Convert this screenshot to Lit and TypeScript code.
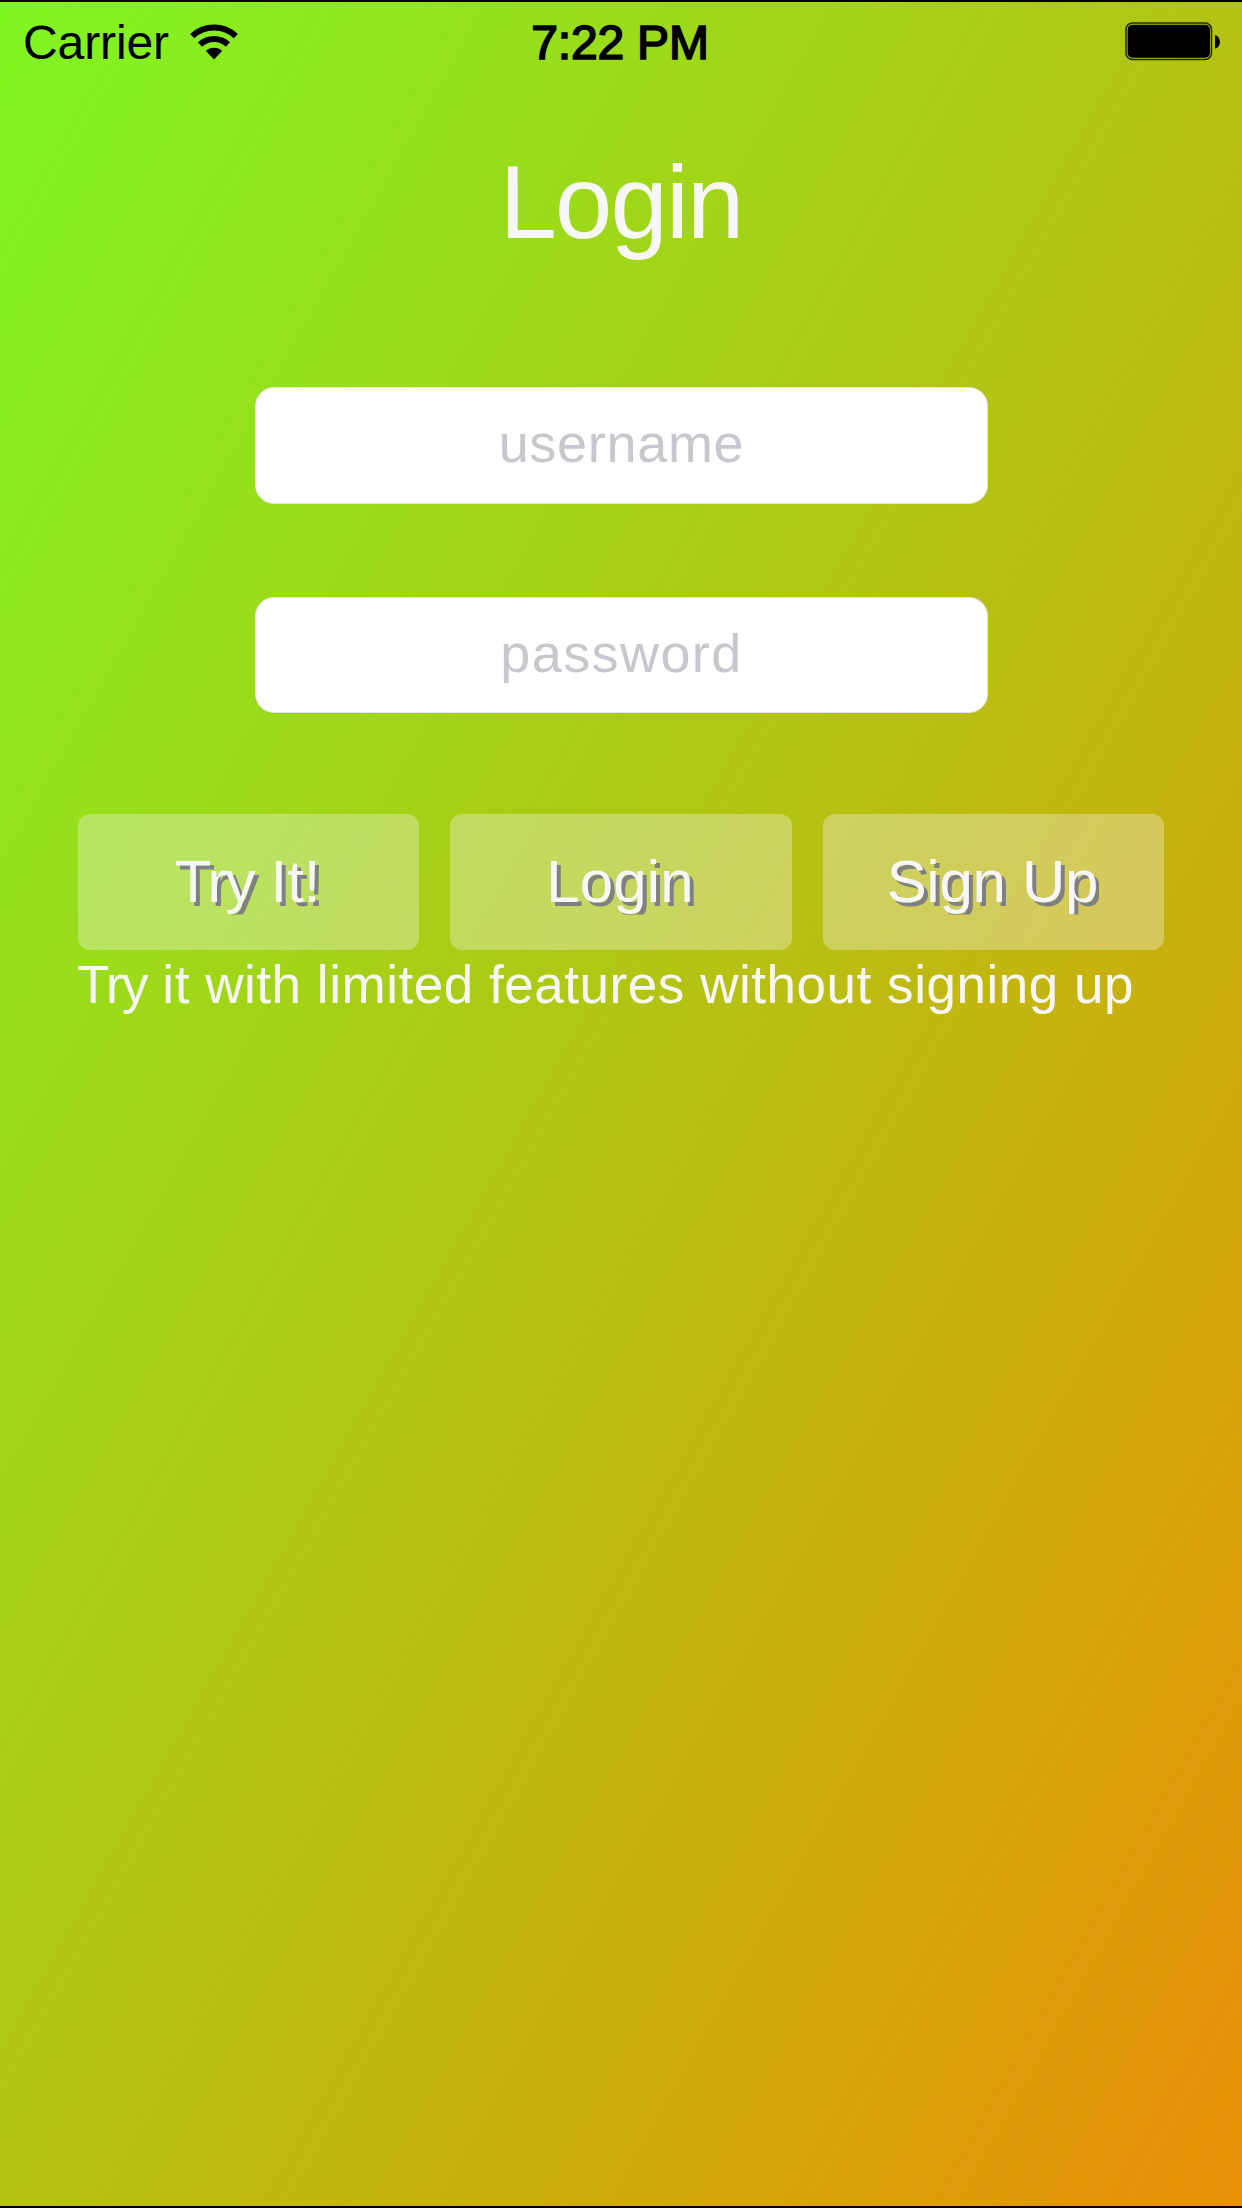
import { LitElement, html, css } from "lit";
import { customElement } from "lit/decorators.js";

@customElement("status-bar")
class StatusBar extends LitElement {
  static styles = css`
    :host {
      display: grid;
      grid-template-columns: 1fr auto 1fr;
      align-items: center;
      height: 81px;
      padding: 0 22px 0 23px;
      box-sizing: border-box;
      font-size: 48px;
      line-height: 56px;
      color: #000;
    }
    .left {
      display: flex;
      align-items: center;
      gap: 20px;
    }
    .carrier {
      letter-spacing: -0.1px;
    }
    .wifi {
      width: 50px;
      height: 38px;
      display: block;
      margin-top: -4px;
    }
    .time {
      letter-spacing: -0.2px;
      margin-left: -3px;
      -webkit-text-stroke: 1.7px #000;
    }
    .battery {
      justify-self: end;
      width: 96px;
      height: 40px;
      display: block;
      margin-top: -3px;
    }
  `;

  render() {
    return html`
      <div class="left">
        <span class="carrier">Carrier</span>
        <svg class="wifi" viewBox="0 0 50 38">
          <g fill="none" stroke="#000" stroke-width="6">
            <path d="M3.2 14.1A32 32 0 0 1 46.8 14.1" />
            <path d="M11 22.5A20.5 20.5 0 0 1 39 22.5" />
          </g>
          <path d="M25 37.5L16.9 29.1A11.7 11.7 0 0 1 33.1 29.1Z" />
        </svg>
      </div>
      <span class="time">7:22 PM</span>
      <svg class="battery" viewBox="0 0 96 40">
        <rect x="2" y="2" width="85.5" height="36.5" rx="6.5" fill="none" stroke="#000" stroke-opacity=".8" stroke-width="1.5" />
        <rect x="3.6" y="3.8" width="82.4" height="33" rx="5" />
        <path d="M91 14.3C97.5 15.5 97.5 26.5 91 27.7Z" />
      </svg>
    `;
  }
}

@customElement("action-button")
class ActionButton extends LitElement {
  static styles = css`
    :host {
      display: block;
    }
    .button {
      display: flex;
      width: 100%;
      height: 136px;
      align-items: center;
      justify-content: center;
      padding: 0 2px 2px 0;
      border: 0;
      border-radius: 12px;
      background: rgba(247, 247, 247, 0.33);
      color: #f7f7f7;
      font: 60px/67px "Liberation Sans", Arial, sans-serif;
      text-shadow: 4px 4px 0 #808080;
    }
    .label {
      clip-path: inset(0 -1px 0 -4px);
    }
  `;

  render() {
    return html`<button class="button"><span class="label"><slot></slot></span></button>`;
  }
}

@customElement("app-root")
class AppRoot extends LitElement {
  static styles = css`
    :host {
      display: block;
      font-family: "Liberation Sans", Arial, sans-serif;
    }
    .screen {
      height: 2208px;
      box-sizing: border-box;
      border-top: 2px solid #000;
      border-bottom: 2px solid #000;
      background: linear-gradient(to bottom right, #7ff621, #ea9006);
    }
    .title {
      margin: 60px 0 0;
      font-size: 103px;
      line-height: 120px;
      font-weight: 400;
      letter-spacing: -1.8px;
      text-align: center;
      color: #f7f7f7;
    }
    .fields {
      display: flex;
      flex-direction: column;
      align-items: center;
      gap: 93px;
      margin-top: 124px;
    }
    .field {
      width: 733px;
      height: 117px;
      box-sizing: border-box;
      padding: 0 19px 5px 20px;
      border: 1px solid #e4e4e6;
      border-radius: 19px;
      background: #fff;
      font: 54px "Liberation Sans", Arial, sans-serif;
      letter-spacing: 0.7px;
      text-align: center;
      color: #222;
    }
    .password {
      height: 116px;
      letter-spacing: 1.4px;
    }
    .field::placeholder {
      color: #c7c7cd;
      opacity: 1;
    }
    .actions {
      display: grid;
      grid-template-columns: repeat(3, 1fr);
      gap: 31px;
      margin: 101px 78px 0;
    }
    .try {
      letter-spacing: -1.8px;
    }
    .login {
      letter-spacing: 0.1px;
    }
    .signup {
      letter-spacing: -0.3px;
    }
    .hint {
      margin: 5px 77px 0;
      font-size: 53px;
      line-height: 60px;
      letter-spacing: 0.54px;
      white-space: nowrap;
      color: #f7f7f7;
    }
    .hint .try {
      letter-spacing: -1.5px;
    }
  `;

  render() {
    return html`
      <main class="screen">
        <status-bar></status-bar>
        <h1 class="title">Login</h1>
        <div class="fields">
          <input class="field" type="text" placeholder="username" />
          <input class="field password" type="password" placeholder="password" />
        </div>
        <div class="actions">
          <action-button><span class="try">Try</span> It!</action-button>
          <action-button><span class="login">Login</span></action-button>
          <action-button><span class="signup">Sign Up</span></action-button>
        </div>
        <p class="hint"><span class="try">Try</span> it with limited features without signing up</p>
      </main>
    `;
  }
}
